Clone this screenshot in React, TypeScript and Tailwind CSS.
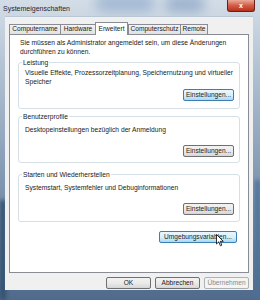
import React from "react";

// Win7 "Systemeigenschaften" dialog, Erweitert tab

const font = { fontFamily: '"Liberation Sans", Arial, sans-serif' };

function Btn({
  children,
  w,
  variant = "normal",
}: {
  children: React.ReactNode;
  w: string;
  variant?: "normal" | "hot" | "disabled";
}) {
  const base =
    "h-[12px] rounded-[2px] border flex items-center justify-center text-[6.6px] leading-none";
  const look =
    variant === "hot"
      ? "border-[#3c7fb1] bg-gradient-to-b from-[#eaf6fd] via-[#d9f0fc] to-[#a7d9f5] text-[#1a1a1a]"
      : variant === "disabled"
      ? "border-[#adb2b5] bg-[#f4f4f4] text-[#8a8a8a]"
      : "border-[#707070] bg-gradient-to-b from-[#f2f2f2] via-[#ebebeb] to-[#d6d6d6] text-[#1a1a1a]";
  return <div className={`${base} ${look} ${w}`}>{children}</div>;
}

function Tab({ label, w, active = false }: { label: string; w: string; active?: boolean }) {
  if (active)
    return (
      <div
        className={`${w} h-[13px] -mb-[1px] relative z-10 bg-white border border-b-0 border-[#898c95] flex items-start justify-center pt-[2px] text-[6.6px] leading-[8px] text-[#1a1a1a]`}
      >
        {label}
      </div>
    );
  return (
    <div
      className={`${w} h-[10px] bg-gradient-to-b from-[#f3f3f3] to-[#e1e1e1] border border-b-0 border-r-0 last:border-r border-[#898c95] flex items-center justify-center text-[6.6px] leading-none text-[#1a1a1a]`}
    >
      {label}
    </div>
  );
}

function Group({
  title,
  children,
  className,
}: {
  title: string;
  children: React.ReactNode;
  className?: string;
}) {
  return (
    <fieldset
      className={`mx-[8px] border border-[#d5dfe5] rounded-[3px] px-[5px] ${className ?? ""}`}
    >
      <legend className="px-[1px] -ml-[2px] text-[6.7px] leading-[9px] text-[#1a1a1a]">
        {title}
      </legend>
      {children}
    </fieldset>
  );
}

export default function App() {
  return (
    <div
      className="relative w-[260px] h-[300px] overflow-hidden bg-gradient-to-b from-[#d3dde7] via-[#8ea3bb] to-[#4f6a8c]"
      style={font}
    >
      {/* glass blur blobs */}
      <div className="absolute left-[95px] top-[-6px] w-[60px] h-[18px] rounded-full bg-[#86a4c8] blur-[6px] opacity-60" />
      <div className="absolute left-[165px] top-[-4px] w-[40px] h-[16px] rounded-full bg-[#7896bd] blur-[6px] opacity-60" />
      <div className="absolute left-[0px] top-[200px] w-[6px] h-[100px] bg-[#33506f] blur-[2px]" />
      <div className="absolute right-[0px] top-[180px] w-[5px] h-[120px] bg-[#4d6f97] blur-[2px]" />

      {/* title bar */}
      <div className="relative h-[16px] flex items-start justify-between pl-[3px] pr-[5px]">
        <span className="mt-[5px] text-[7px] leading-[8px] text-[#1e2630]">Systemeigenschaften</span>
        <div className="w-[28px] h-[12px] rounded-b-[3px] border border-t-0 border-[#6b1f17] bg-gradient-to-b from-[#e9a99a] via-[#d25d45] to-[#b82f1b] flex items-center justify-center">
          <span className="text-white text-[7px] font-bold leading-none">x</span>
        </div>
      </div>

      {/* client area */}
      <div className="relative mx-[5px] w-[248px] h-[274px] bg-[#f0f0f0] border-t border-[#b9c6d3] px-[4px] pt-[5px]">
        {/* tabs */}
        <div className="flex items-end h-[12px]">
          <Tab label="Computername" w="w-[51px]" />
          <Tab label="Hardware" w="w-[35px]" />
          <Tab label="Erweitert" w="w-[33px]" active />
          <Tab label="Computerschutz" w="w-[52px]" />
          <Tab label="Remote" w="w-[28px]" />
        </div>

        {/* panel */}
        <div className="relative h-[239px] bg-white border border-[#898c95] pt-[3px]">
          <p className="pl-[10px] text-[6.7px] leading-[9px] text-[#1a1a1a]">
            Sie müssen als Administrator angemeldet sein, um diese Änderungen
            <br />
            durchführen zu können.
          </p>

          <Group title="Leistung" className="mt-[2px] pb-[7px]">
            <p className="pt-[1px] pl-[1px] text-[6.7px] leading-[9px] text-[#1a1a1a]">
              Visuelle Effekte, Prozessorzeitplanung, Speichernutzung und virtueller
              <br />
              Speicher
            </p>
            <div className="flex justify-end mt-[3px]">
              <Btn w="w-[51px]" variant="hot">Einstellungen...</Btn>
            </div>
          </Group>

          <Group title="Benutzerprofile" className="mt-[3px] pb-[5px]">
            <p className="pt-[4px] pl-[1px] text-[6.7px] leading-[9px] text-[#1a1a1a]">
              Desktopeinstellungen bezüglich der Anmeldung
            </p>
            <div className="flex justify-end mt-[11px]">
              <Btn w="w-[51px]">Einstellungen...</Btn>
            </div>
          </Group>

          <Group title="Starten und Wiederherstellen" className="mt-[7px] pb-[6px]">
            <p className="pt-[4px] pl-[1px] text-[6.7px] leading-[9px] text-[#1a1a1a]">
              Systemstart, Systemfehler und Debuginformationen
            </p>
            <div className="flex justify-end mt-[11px]">
              <Btn w="w-[51px]">Einstellungen...</Btn>
            </div>
          </Group>

          <div className="flex justify-end mt-[9px] pr-[11px]">
            <Btn w="w-[78px]" variant="hot">Umgebungsvariablen...</Btn>
          </div>

          {/* mouse cursor */}
          <svg
            className="absolute left-[206px] top-[199px]"
            width="8"
            height="13"
            viewBox="0 0 8 13"
          >
            <path
              d="M0.5 0.5 L0.5 10 L2.8 7.8 L4.4 11.8 L5.8 11.2 L4.3 7.3 L7.3 7.3 Z"
              fill="#fff"
              stroke="#000"
              strokeWidth="0.8"
              strokeLinejoin="round"
            />
          </svg>
        </div>

        {/* dialog buttons */}
        <div className="flex justify-end gap-[4px] mt-[4px]">
          <Btn w="w-[45px]">OK</Btn>
          <Btn w="w-[45px]">Abbrechen</Btn>
          <Btn w="w-[45px]" variant="disabled">Übernehmen</Btn>
        </div>
      </div>
    </div>
  );
}
